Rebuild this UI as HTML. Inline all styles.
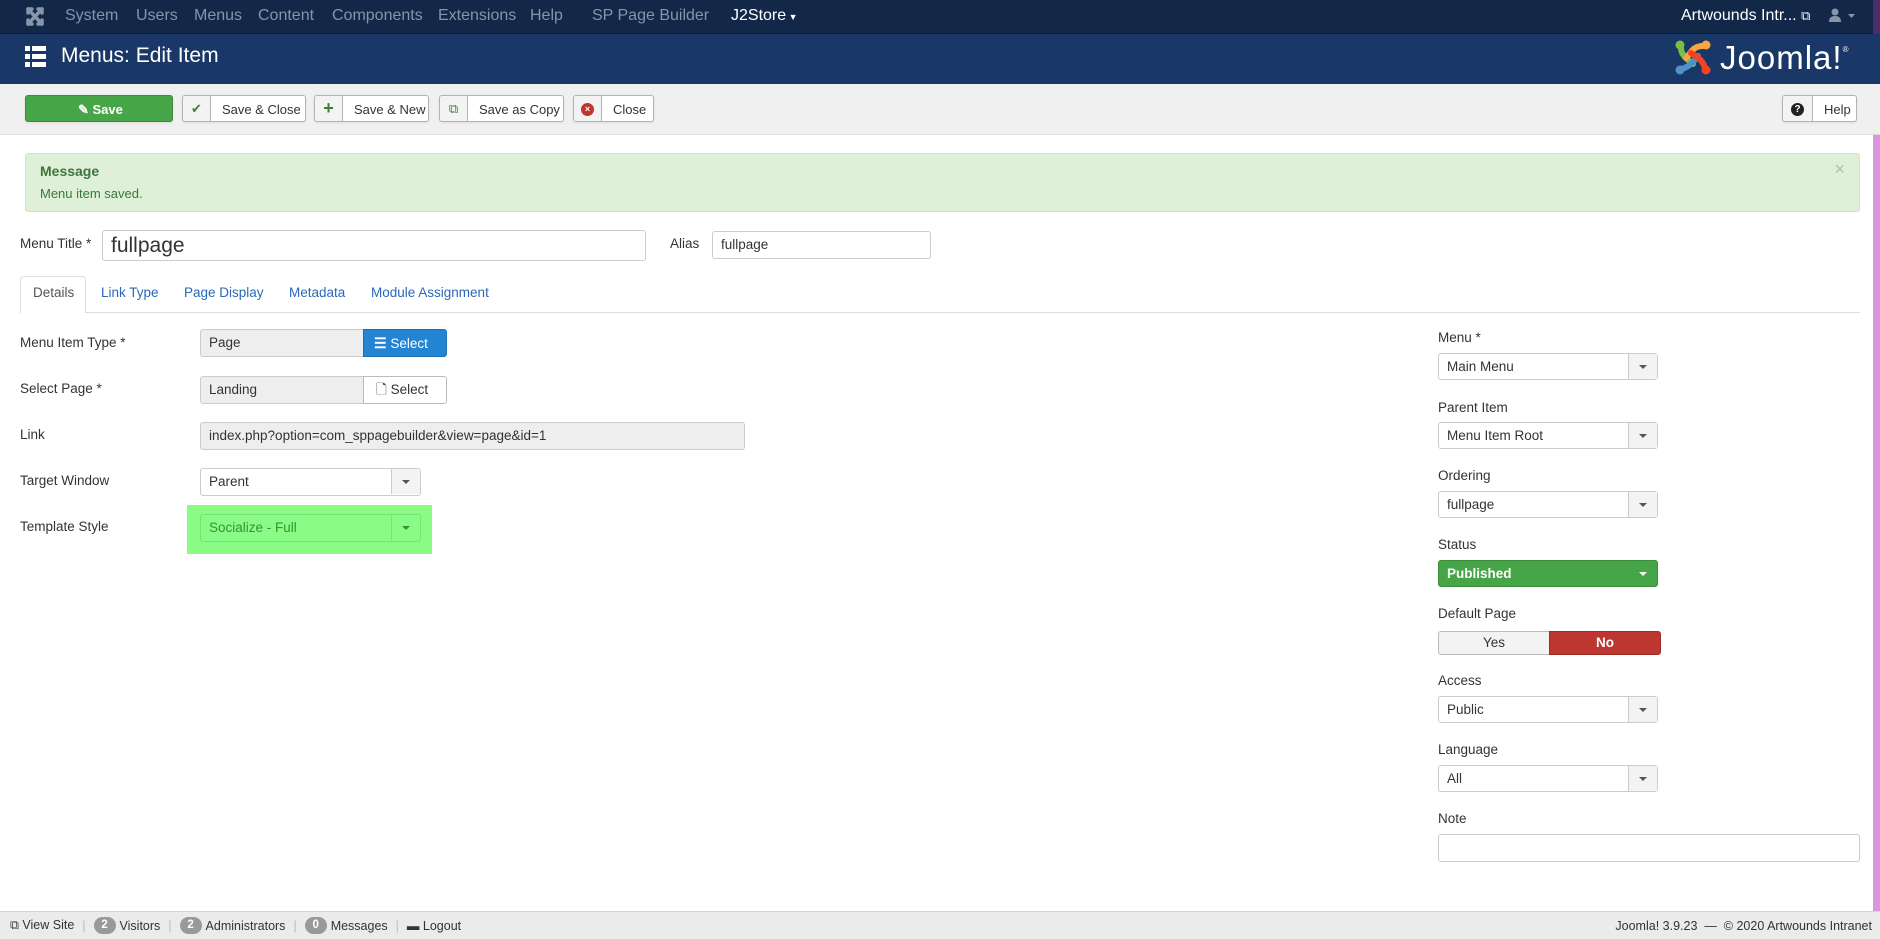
<!DOCTYPE html>
<html><head><meta charset="utf-8"><style>
*{box-sizing:border-box;margin:0;padding:0}
body{width:1880px;height:939px;overflow:hidden;background:#fff;font-family:"Liberation Sans",Arial,sans-serif;font-size:15.6px;color:#333;position:relative}
.a{position:absolute}
#nav{left:0;top:0;width:1880px;height:34px;background:#132748;border-bottom:1px solid #0c1a33}
#nav span{position:absolute;top:7px;color:#8794a9;font-size:16px}
#hdr{left:0;top:34px;width:1880px;height:50px;background:#1a3867}
#tb{left:0;top:84px;width:1880px;height:51px;background:#f0f0f0;border-bottom:1px solid #ddd}
.btn{position:absolute;top:95px;height:27px;background:#fff;border:1px solid #b3b3b3;border-radius:3px;font-size:13px;color:#333;box-shadow:0 1px 2px rgba(0,0,0,.08)}
.btn .ic{position:absolute;left:0;top:0;bottom:0;width:28px;background:#f3f3f3;border-right:1px solid #b3b3b3;border-radius:3px 0 0 3px;text-align:center;line-height:25px}
.btn .t{position:absolute;top:6px}
.lbl{position:absolute;left:20px;font-size:13.5px;color:#333}
.inp{position:absolute;border:1px solid #ccc;border-radius:3px;background:#fff;font-size:13.5px;padding-left:8px;line-height:26px;height:28px}
.sel{position:absolute;left:1438px;width:220px;height:27px;border:1px solid #ccc;border-radius:3px;background:#fff;font-size:13.5px;line-height:25px;padding-left:8px}
.sel:after{content:"";position:absolute;right:0;top:0;width:28px;height:25px;background:#f3f3f3;border-left:1px solid #ccc}
.sel i{position:absolute;right:10px;top:11px;width:0;height:0;border-left:4px solid transparent;border-right:4px solid transparent;border-top:4px solid #555;z-index:2}
.rl{position:absolute;left:1438px;font-size:13.5px;color:#333}
#foot{left:0;top:911px;width:1880px;height:28px;background:#ebebeb;border-top:1px solid #d4d4d4;font-size:12.5px;color:#333;display:flex;align-items:center;padding-left:10px;white-space:nowrap}
#foot .s{color:#bbb;margin:0 8px}
.bd{display:inline-block;background:#999;color:#fff;border-radius:9px;width:22px;height:17px;text-align:center;line-height:17px;font-size:11.5px;font-weight:bold;margin-right:4px}
</style></head><body>

<div id="nav" class="a">
 <svg class="a" style="left:25px;top:6px" width="20" height="21" viewBox="0 0 20 21"><g stroke="#8794a9" stroke-width="3.5" stroke-linecap="round"><path d="M3 3L17 18M17 3L3 18"/><path d="M3 3v4M3 3h4M17 3v4M17 3h-4M3 18v-4M3 18h4M17 18v-4M17 18h-4"/></g></svg>
 <span style="left:65px">System</span><span style="left:136px">Users</span><span style="left:194px">Menus</span><span style="left:258px">Content</span><span style="left:332px">Components</span><span style="left:438px">Extensions</span><span style="left:530px">Help</span><span style="left:592px">SP Page Builder</span><span style="left:731px;color:#fff">J2Store<small style="font-size:9px"> ▼</small></span>
 <span style="left:1681px;color:#fff">Artwounds Intr... <small style="font-size:13px">⧉</small></span>
 <svg class="a" style="left:1829px;top:8px" width="26" height="14" viewBox="0 0 26 14"><circle cx="6" cy="4" r="3.5" fill="#8794a9"/><path d="M0 14c0-5 3-6 6-6s6 1 6 6z" fill="#8794a9"/><path d="M19 6h7l-3.5 4z" fill="#8794a9"/></svg>
</div>
<div class="a" style="left:1873px;top:0;width:7px;height:84px;background:#4b2d6b"></div>

<div id="hdr" class="a">
 <svg class="a" style="left:25px;top:12px" width="21" height="21" viewBox="0 0 21 21" fill="#fff"><rect x="0" y="0" width="5" height="5"/><rect x="7" y="0" width="14" height="5"/><rect x="0" y="8" width="5" height="5"/><rect x="7" y="8" width="14" height="5"/><rect x="0" y="16" width="5" height="5"/><rect x="7" y="16" width="14" height="5"/></svg>
 <div class="a" style="left:61px;top:10px;color:#fff;font-size:21px">Menus: Edit Item</div>
 <svg class="a" style="left:1673px;top:4px" width="40" height="39" viewBox="0 0 40 39">
  <g stroke-width="6" stroke-linecap="round" fill="none">
   <path d="M8 10 Q8 16 14 21 L20 26" stroke="#7ac143"/>
   <path d="M30 8 Q22 8 18 14 L13 20" stroke="#f9a541"/>
   <path d="M8 31 Q14 30 20 24 L25 18" stroke="#5091cd"/>
   <path d="M32 30 Q30 23 24 19 L18 15" stroke="#f44321"/>
  </g>
  <circle cx="7" cy="7" r="4.5" fill="#7ac143"/><circle cx="33" cy="7" r="4.5" fill="#f9a541"/><circle cx="7" cy="32" r="4.5" fill="#5091cd"/><circle cx="33" cy="32" r="4.5" fill="#f44321"/>
 </svg>
 <div class="a" style="left:1720px;top:4px;color:#fff;font-size:33px;line-height:40px;font-weight:300;letter-spacing:1px">Joomla!<sup style="font-size:8px;vertical-align:top;position:relative;top:-8px">®</sup></div>
</div>
<div class="a" style="left:1873px;top:84px;width:7px;height:827px;background:#d996e0"></div>

<div id="tb" class="a"></div>
<div class="btn" style="left:25px;width:148px;background:#46a546;border-color:#3b8d3b;color:#fff"><span class="t" style="left:52px;font-weight:bold">✎ Save</span></div>
<div class="btn" style="left:182px;width:124px"><div class="ic" style="color:#378137">✔</div><span class="t" style="left:39px">Save &amp; Close</span></div>
<div class="btn" style="left:314px;width:115px"><div class="ic" style="color:#378137;font-weight:bold;font-size:18px">+</div><span class="t" style="left:39px">Save &amp; New</span></div>
<div class="btn" style="left:439px;width:125px"><div class="ic" style="color:#378137">⧉</div><span class="t" style="left:39px">Save as Copy</span></div>
<div class="btn" style="left:573px;width:81px"><div class="ic"><span style="display:inline-block;width:13px;height:13px;border-radius:50%;background:#bd362f;color:#fff;font-size:9px;line-height:13px;font-weight:bold;vertical-align:middle">×</span></div><span class="t" style="left:39px">Close</span></div>
<div class="btn" style="left:1782px;width:75px"><div class="ic" style="width:30px"><span style="display:inline-block;width:13px;height:13px;border-radius:50%;background:#222;color:#fff;font-size:10px;line-height:13px;font-weight:bold;vertical-align:middle">?</span></div><span class="t" style="left:41px">Help</span></div>

<div class="a" style="left:25px;top:153px;width:1835px;height:59px;background:#dff0d8;border:1px solid #d0e6be;border-radius:3px;color:#3c763d">
 <div class="a" style="left:14px;top:9px;font-weight:bold;font-size:14px">Message</div>
 <div class="a" style="left:14px;top:32px;font-size:13px">Menu item saved.</div>
 <div class="a" style="right:14px;top:5px;font-size:18px;color:#a9c4a0">×</div>
</div>

<div class="lbl" style="top:236px">Menu Title *</div>
<div class="inp" style="left:102px;top:230px;width:544px;height:31px;font-size:21px;line-height:29px">fullpage</div>
<div class="lbl" style="left:670px;top:236px">Alias</div>
<div class="inp" style="left:712px;top:231px;width:219px;font-size:13.5px">fullpage</div>

<div class="a" style="left:20px;top:312px;width:1840px;height:1px;background:#ddd"></div>
<div class="a" style="left:20px;top:276px;width:66px;height:37px;background:#fff;border:1px solid #ddd;border-bottom:none;border-radius:4px 4px 0 0"></div>
<div class="a" style="left:33px;top:285px;font-size:13.5px;color:#555">Details</div>
<div class="a" style="left:101px;top:285px;font-size:13.5px;color:#2a69b8">Link Type</div>
<div class="a" style="left:184px;top:285px;font-size:13.5px;color:#2a69b8">Page Display</div>
<div class="a" style="left:289px;top:285px;font-size:13.5px;color:#2a69b8">Metadata</div>
<div class="a" style="left:371px;top:285px;font-size:13.5px;color:#2a69b8">Module Assignment</div>

<div class="lbl" style="top:335px">Menu Item Type *</div>
<div class="inp" style="left:200px;top:329px;width:164px;background:#eee;border-radius:3px 0 0 3px">Page</div>
<div class="a" style="left:363px;top:329px;width:84px;height:28px;background:#2384d3;border:1px solid #1d6fb3;border-radius:0 3px 3px 0;color:#fff;font-size:13.5px;line-height:26px;padding-left:10px"><b style="font-size:14px">☰</b> Select</div>
<div class="lbl" style="top:381px">Select Page *</div>
<div class="inp" style="left:200px;top:376px;width:164px;background:#eee;border-radius:3px 0 0 3px">Landing</div>
<div class="a" style="left:363px;top:376px;width:84px;height:28px;background:#fff;border:1px solid #bbb;border-radius:0 3px 3px 0;font-size:13.5px;line-height:26px;padding-left:12px">🗋 Select</div>
<div class="lbl" style="top:427px">Link</div>
<div class="inp" style="left:200px;top:422px;width:545px;background:#eee">index.php?option=com_sppagebuilder&amp;view=page&amp;id=1</div>
<div class="lbl" style="top:473px">Target Window</div>
<div class="sel" style="left:200px;top:468px;width:221px;height:28px;line-height:26px"><i></i>Parent</div>
<div class="lbl" style="top:519px">Template Style</div>
<div class="a" style="left:187px;top:505px;width:245px;height:49px;background:#88fc84"></div>
<div class="sel" style="left:200px;top:514px;width:221px;height:28px;line-height:26px;background:#88fc84;border-color:#7ae276;color:#3a8f38"><i style="border-top-color:#3a8f38"></i>Socialize - Full</div>
<style>.sel[style*="88fc84"]:after{background:#88fc84;border-left-color:#7ae276}</style>

<div class="rl" style="top:330px">Menu *</div>
<div class="sel" style="top:353px"><i></i>Main Menu</div>
<div class="rl" style="top:400px">Parent Item</div>
<div class="sel" style="top:422px"><i></i>Menu Item Root</div>
<div class="rl" style="top:468px">Ordering</div>
<div class="sel" style="top:491px"><i></i>fullpage</div>
<div class="rl" style="top:537px">Status</div>
<div class="a" style="left:1438px;top:560px;width:220px;height:27px;background:#46a546;border:1px solid #3b8d3b;border-radius:3px;color:#fff;font-size:13.5px;font-weight:bold;line-height:25px;padding-left:8px">Published<span style="position:absolute;right:10px;top:11px;border-left:4px solid transparent;border-right:4px solid transparent;border-top:4px solid #fff"></span></div>
<div class="rl" style="top:606px">Default Page</div>
<div class="a" style="left:1438px;top:631px;width:112px;height:24px;background:#f3f3f3;border:1px solid #bbb;border-radius:3px 0 0 3px;text-align:center;font-size:13.5px;line-height:22px">Yes</div>
<div class="a" style="left:1549px;top:631px;width:112px;height:24px;background:#bd362f;border:1px solid #a02c26;border-radius:0 3px 3px 0;text-align:center;font-size:13.5px;line-height:22px;color:#fff;font-weight:bold">No</div>
<div class="rl" style="top:673px">Access</div>
<div class="sel" style="top:696px"><i></i>Public</div>
<div class="rl" style="top:742px">Language</div>
<div class="sel" style="top:765px"><i></i>All</div>
<div class="rl" style="top:811px">Note</div>
<div class="a" style="left:1438px;top:834px;width:422px;height:28px;border:1px solid #ccc;border-radius:3px"></div>

<div id="foot" class="a">
 <span>⧉ View Site</span><span class="s">|</span>
 <span class="bd">2</span><span>Visitors</span><span class="s">|</span>
 <span class="bd">2</span><span>Administrators</span><span class="s">|</span>
 <span class="bd">0</span><span>Messages</span><span class="s">|</span>
 <span>▬ Logout</span>
 <span style="margin-left:auto;margin-right:8px">Joomla! 3.9.23 &nbsp;— &nbsp;© 2020 Artwounds Intranet</span>
</div>
</body></html>
